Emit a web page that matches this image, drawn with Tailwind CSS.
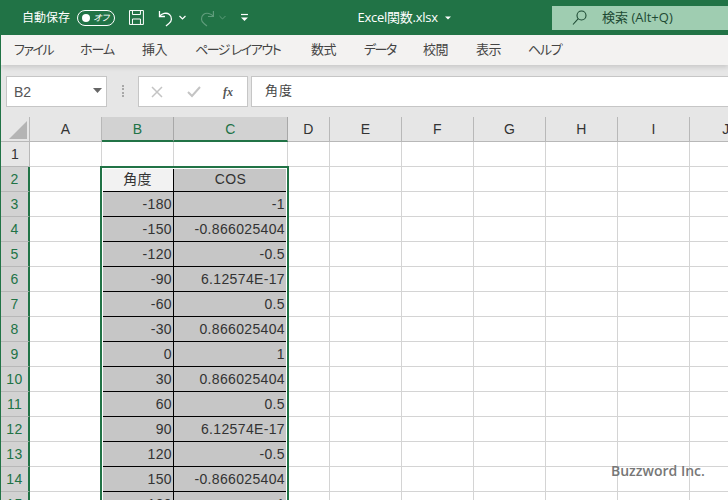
<!DOCTYPE html>
<html lang="ja">
<head>
    <meta charset="UTF-8">
    <title>Excel関数.xlsx</title>
    <script src="https://cdn.jsdelivr.net/npm/@tailwindcss/browser@4"></script>
</head>
<body class="w-[728px] h-[500px] overflow-hidden bg-white font-['Open_Sans','Noto_Sans_CJK_JP',sans-serif] [font-feature-settings:'palt']">

    <!-- Title bar -->
    <div class="h-[35px] bg-[#217346] text-white flex items-center text-xs">
        <span class="ml-[22px] w-[48px] whitespace-nowrap text-[12px]">自動保存</span>
        <div class="ml-[7px] w-[38px] h-[16px] border border-white rounded-full flex items-center justify-between pl-[4px] pr-[5px]">
            <span class="w-[8px] h-[8px] bg-white rounded-full"></span>
            <span class="text-[9px] italic leading-none">オフ</span>
        </div>
        <svg class="ml-[13px]" width="17" height="17" viewBox="0 0 17 17" fill="none" stroke="white" stroke-width="1"><path d="M1.500 1.500h14v14h-14zM4.500 1.500v4h8v-4M4.500 15.500v-5.500h8v5.500"/></svg>
        <svg class="ml-[12px]" width="18" height="18" viewBox="0 0 18 18" fill="none" stroke="white" stroke-width="1.300"><path d="M2.500 2v5.500h5.500M2.500 7.500c2-3 7-4.500 10-2 3 2.500 2.500 7-.5 9l-3 2.500"/></svg>
        <svg class="ml-[4px]" width="7" height="5" viewBox="0 0 7 5" fill="none" stroke="white" stroke-width="1.200"><path d="M.5 1l3 3 3-3"/></svg>
        <svg class="ml-[12px]" width="18" height="18" viewBox="0 0 18 18" fill="none" stroke="#5f9c7b" stroke-width="1.200"><path d="M15.500 2v5.500h-5.500M15.500 7.500c-2-3-7-4.500-10-2-3 2.500-2.500 7 .5 9l3 2.500"/></svg>
        <svg class="ml-[3px]" width="7" height="5" viewBox="0 0 7 5" fill="none" stroke="#5f9c7b" stroke-width="1"><path d="M.5 1l3 3 3-3"/></svg>
        <svg class="ml-[14px]" width="9" height="9" viewBox="0 0 9 9" fill="none" stroke="white" stroke-width="1.200"><path d="M1 1.500h7"/><path d="M1 4.500h7L4.500 8z" fill="white" stroke="none"/></svg>
        <span class="ml-[109px] w-[81px] whitespace-nowrap text-[13px] tracking-[-0.25px]">Excel関数.xlsx</span>
        <svg class="ml-[7px]" width="6" height="4" viewBox="0 0 6 4" fill="white"><path d="M0 .5h6L3 3.500z"/></svg>
        <div class="ml-[101px] w-[177px] h-[24px] bg-[#9fcdb1] text-[#1d4a33] flex items-center">
            <svg class="ml-[20px]" width="15" height="15" viewBox="0 0 15 15" fill="none" stroke="#1d4a33" stroke-width="1.100"><circle cx="9.500" cy="5.500" r="4.500"/><path d="M6.300 8.700L1 14.500"/></svg>
            <span class="ml-[15px] text-[13px] whitespace-nowrap">検索 (Alt+Q)</span>
        </div>
    </div>

    <div class="h-[465px] overflow-hidden border-l border-[#217346]">
        <!-- Ribbon tabs -->
        <div class="relative z-10 h-[30px] bg-[#f3f2f1] shadow-[0_2px_5px_rgba(0,0,0,0.14)] flex items-center gap-7 pl-[13px] text-[13px] text-[#444] whitespace-nowrap">
            <span class="w-[38px] tracking-[-1.500px]">ファイル</span>
            <span class="w-[34px] tracking-[-1px]">ホーム</span>
            <span class="w-[25px] tracking-[-0.5px]">挿入</span>
            <span class="w-[88px] tracking-[-1.500px]">ページ レイアウト</span>
            <span class="w-[25px] tracking-[-0.5px]">数式</span>
            <span class="w-[31px] tracking-[-1.600px]">データ</span>
            <span class="w-[25px] tracking-[-0.5px]">校閲</span>
            <span class="w-[24px] tracking-[-0.5px]">表示</span>
            <span class="w-[32px] tracking-[-1.300px]">ヘルプ</span>
        </div>

        <!-- Formula bar -->
        <div class="h-[52px] bg-[#e6e6e6] flex items-start pt-[11px] pb-[10px]">
            <div class="ml-[5px] w-[101px] h-[31px] bg-white border border-[#c6c6c6] flex items-center justify-between pl-[7px] pr-[3px] text-[14px] text-[#555] font-['Liberation_Sans',sans-serif]">
                <span class="mt-[2px]">B2</span>
                <svg width="9" height="5" viewBox="0 0 9 5" fill="#666" class="mr-[1px] mb-[3px]"><path d="M0 0h9L4.500 5z"/></svg>
            </div>
            <div class="ml-[15px] w-[2px] h-[12px] mt-[9px] border-l-2 border-dotted border-[#a8a8a8]"></div>
            <div class="ml-[14px] w-[110px] h-[31px] bg-white border border-[#c6c6c6] flex items-center">
                <svg class="ml-[12px]" width="12" height="12" viewBox="0 0 12 12" fill="none" stroke="#c4c4c4" stroke-width="1.500"><path d="M1 1l10 10M11 1L1 11"/></svg>
                <svg class="ml-[24px]" width="14" height="12" viewBox="0 0 14 12" fill="none" stroke="#c4c4c4" stroke-width="2"><path d="M1 6l4 4 8-9"/></svg>
                <span class="ml-[22px] text-[12px] italic font-bold text-[#555] font-['Liberation_Serif',serif]">fx</span>
            </div>
            <div class="ml-[3px] flex-1 h-[31px] bg-white border-y border-l border-[#c6c6c6] flex items-center pl-[13px] pb-[2px] text-[13px] tracking-[1px] text-[#444]">角度</div>
        </div>

        <!-- Sheet -->
        <div id="sheet" class="relative font-['Liberation_Sans','Noto_Sans_CJK_JP',sans-serif] text-[14px] text-[#333] tracking-[0.35px]">
            <div class="grid grid-cols-[29px_72px_72px_114px_42px_72px_72px_72px_72px_72px_72px] grid-rows-[25px] h-[25px] bg-[#e6e6e6] text-center leading-[24px]">
                <div class="relative border-r border-b border-[#b8b8b8]">
                    <svg class="absolute left-[8px] top-[4px]" width="18" height="18" viewBox="0 0 18 18"><path d="M18 0v18H0z" fill="#b4b4b4"/></svg>
                </div>
                <div class="border-r border-b border-[#b8b8b8]">A</div>
                <div class="bg-[#d2d2d2] text-[#217346] border-r border-[#a8a8a8] border-b-2 border-b-[#217346]">B</div>
                <div class="bg-[#d2d2d2] text-[#217346] border-r border-[#a8a8a8] border-b-2 border-b-[#217346]">C</div>
                <div class="border-r border-b border-[#b8b8b8]">D</div>
                <div class="border-r border-b border-[#b8b8b8]">E</div>
                <div class="border-r border-b border-[#b8b8b8]">F</div>
                <div class="border-r border-b border-[#b8b8b8]">G</div>
                <div class="border-r border-b border-[#b8b8b8]">H</div>
                <div class="border-r border-b border-[#b8b8b8]">I</div>
                <div class="border-b border-[#b8b8b8]">J</div>
            </div>
            <div id="rows"></div>
            <!-- Selection frame -->
            <div class="absolute left-[99px] top-[49px] w-[189px] h-[400px] border-2 border-[#217346] shadow-[inset_0_0_0_1px_white]"></div>
        </div>
    </div>

    <!-- Watermark -->
    <div class="absolute left-[611px] top-[460px] text-[14px] font-semibold text-[#777] whitespace-nowrap">Buzzword Inc.</div>

    <script>
        const data = [
            ['-180', '-1'], ['-150', '-0.866025404'], ['-120', '-0.5'], ['-90', '6.12574E-17'],
            ['-60', '0.5'], ['-30', '0.866025404'], ['0', '1'], ['30', '0.866025404'],
            ['60', '0.5'], ['90', '6.12574E-17'], ['120', '-0.5'], ['150', '-0.866025404'], ['180', '-1']
        ];
        const rowClass = 'grid grid-cols-[29px_72px_72px_114px_42px_72px_72px_72px_72px_72px_72px] grid-rows-[25px] h-[25px] leading-[24px]';
        const gridCell = 'border-r border-b border-[#d4d4d4]';
        const blackCell = 'border-r border-b border-black bg-[#c6c6c6] text-right pr-[1px]';

        function addRow(num, selected, b, c) {
            const row = document.createElement('div');
            row.className = rowClass;
            const head = selected
                ? 'bg-[#d2d2d2] text-[#217346] text-center border-r-2 border-r-[#217346] border-b border-b-[#b8b8b8]'
                : 'bg-[#e6e6e6] text-center border-r border-b border-[#b8b8b8]';
            let html = `<div class="${head}">${num}</div><div class="${gridCell}"></div>`;
            html += `<div class="${b.cls}">${b.text}</div><div class="${c.cls}">${c.text}</div>`;
            for (let i = 0; i < 7; i++) html += `<div class="${gridCell}"></div>`;
            row.innerHTML = html;
            document.getElementById('rows').appendChild(row);
        }

        addRow(1, false, { cls: gridCell, text: '' }, { cls: gridCell, text: '' });
        addRow(2, true,
            { cls: 'border-r border-b border-black bg-[#f2f2f2] text-center', text: '角度' },
            { cls: 'border-r border-b border-black bg-[#c6c6c6] text-center', text: 'COS' });
        data.forEach((d, i) => {
            addRow(i + 3, true, { cls: blackCell, text: d[0] }, { cls: 'border-r border-b border-black bg-[#c6c6c6] text-right pr-[2px]', text: d[1] });
        });
    </script>

</body>
</html>
